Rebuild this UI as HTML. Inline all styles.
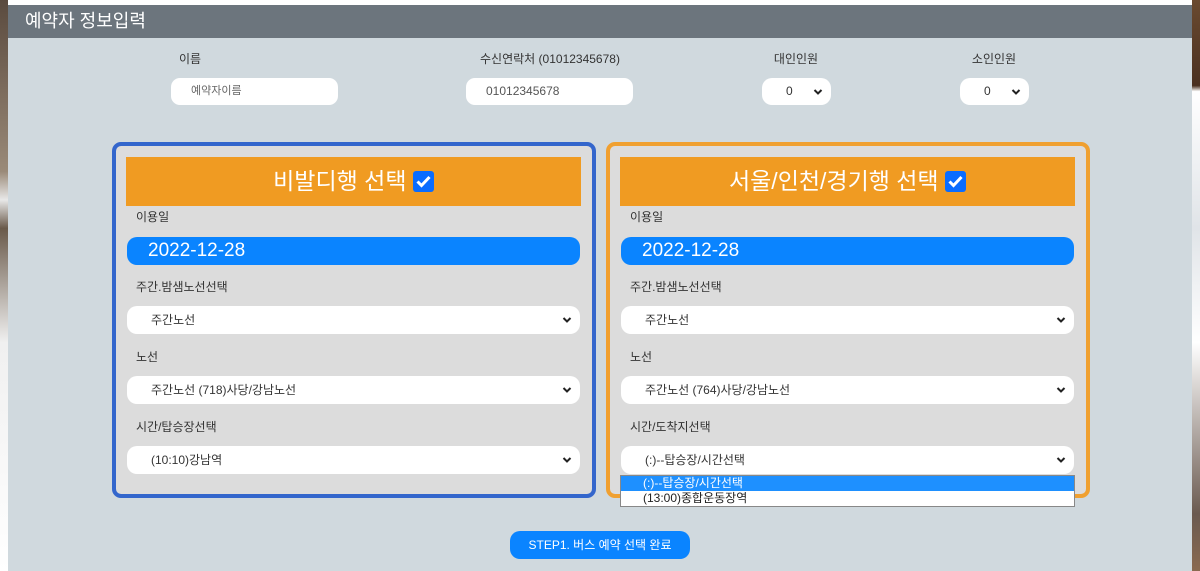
<!DOCTYPE html>
<html><head><meta charset="utf-8"><style>
*{box-sizing:border-box;margin:0;padding:0}
body{width:1200px;height:571px;overflow:hidden;position:relative;background:#fff;font-family:"Liberation Sans","Noto Sans CJK KR",sans-serif;color:#333}
.a{position:absolute}
.lbl{font-size:12px;color:#333;text-align:center}
.inp{background:#fff;border-radius:9px;font-size:12px;color:#555;padding-left:20px;line-height:27px}
.sel{background:#fff;border-radius:10px;font-size:12px;color:#333;line-height:28px;padding-left:20px}
.chev{position:absolute;right:8px;top:0;width:10px;height:28px}
.box{border-radius:9px;background:#dcdcdc}
.small{font-size:12px;color:#333}
</style></head><body>
<div class="a" style="left:0;top:0;width:8px;height:571px;background:linear-gradient(#5a4a3e,#9a8a78 30%,#e8e8e8 35%,#6a5a4a 40%,#f0f0f0 60%,#fff)"></div>
<div class="a" style="left:1192px;top:0;width:8px;height:571px;background:linear-gradient(#6a4a30,#4a3020 15%,#fff 16%,#e0e4e8 40%,#fff 60%,#6a5a50 90%,#8a6a50)"></div>
<div class="a" style="left:8px;top:5px;width:1184px;height:566px;background:#d0d9de"></div>
<div class="a" style="left:8px;top:5px;width:1184px;height:33px;background:#6c757d;color:#fff;font-size:18px;line-height:32px;padding-left:17px">예약자 정보입력</div>

<div class="a lbl" style="left:150px;top:50px;width:80px">이름</div>
<div class="a lbl" style="left:440px;top:50px;width:220px">수신연락처 (01012345678)</div>
<div class="a lbl" style="left:756px;top:50px;width:80px">대인인원</div>
<div class="a lbl" style="left:954px;top:50px;width:80px">소인인원</div>
<div class="a inp" style="left:171px;top:78px;width:167px;height:27px;font-size:11px;color:#666">예약자이름</div>
<div class="a inp" style="left:466px;top:78px;width:167px;height:27px">01012345678</div>
<div class="a sel" style="left:762px;top:78px;width:69px;height:27px;line-height:27px;padding-left:24px">0<svg class="chev" viewBox="0 0 10 28"><path d="M1.5 12l3.5 3.5 3.5-3.5" stroke="#222" stroke-width="2" fill="none"/></svg></div>
<div class="a sel" style="left:960px;top:78px;width:69px;height:27px;line-height:27px;padding-left:24px">0<svg class="chev" viewBox="0 0 10 28"><path d="M1.5 12l3.5 3.5 3.5-3.5" stroke="#222" stroke-width="2" fill="none"/></svg></div>

<!-- left box -->
<div class="a box" style="left:112px;top:142px;width:484px;height:356px;border:4px solid #3366cc"></div>
<div class="a" style="left:126px;top:157px;width:455px;height:49px;background:#f09b22;color:#fff;font-size:23px;line-height:49px;text-align:center">비발디행 선택 <span style="display:inline-block;width:21px;height:21px;background:#0a6cff;border-radius:3px;vertical-align:-3px;position:relative"><svg width="21" height="21" viewBox="0 0 21 21" style="position:absolute;left:0;top:0"><path d="M4.5 10.5l4 4 8-8.5" stroke="#fff" stroke-width="3" fill="none"/></svg></span></div>
<div class="a small" style="left:136px;top:208px">이용일</div>
<div class="a" style="left:127px;top:237px;width:453px;height:28px;background:#0a84ff;border-radius:10px;color:#fff;font-size:19px;line-height:28px;padding-left:21px">2022-12-28</div>
<div class="a small" style="left:136px;top:278px">주간.밤샘노선선택</div>
<div class="a sel" style="left:127px;top:306px;width:453px;height:28px;padding-left:24px">주간노선<svg class="chev" viewBox="0 0 10 28"><path d="M1.5 12l3.5 3.5 3.5-3.5" stroke="#222" stroke-width="2" fill="none"/></svg></div>
<div class="a small" style="left:136px;top:348px">노선</div>
<div class="a sel" style="left:127px;top:376px;width:453px;height:28px;padding-left:24px">주간노선 (718)사당/강남노선<svg class="chev" viewBox="0 0 10 28"><path d="M1.5 12l3.5 3.5 3.5-3.5" stroke="#222" stroke-width="2" fill="none"/></svg></div>
<div class="a small" style="left:136px;top:418px">시간/탑승장선택</div>
<div class="a sel" style="left:127px;top:446px;width:453px;height:28px;padding-left:24px">(10:10)강남역<svg class="chev" viewBox="0 0 10 28"><path d="M1.5 12l3.5 3.5 3.5-3.5" stroke="#222" stroke-width="2" fill="none"/></svg></div>

<!-- right box -->
<div class="a box" style="left:606px;top:142px;width:484px;height:356px;border:4px solid #f0a030"></div>
<div class="a" style="left:620px;top:157px;width:455px;height:49px;background:#f09b22;color:#fff;font-size:23px;line-height:49px;text-align:center">서울/인천/경기행 선택 <span style="display:inline-block;width:21px;height:21px;background:#0a6cff;border-radius:3px;vertical-align:-3px;position:relative"><svg width="21" height="21" viewBox="0 0 21 21" style="position:absolute;left:0;top:0"><path d="M4.5 10.5l4 4 8-8.5" stroke="#fff" stroke-width="3" fill="none"/></svg></span></div>
<div class="a small" style="left:630px;top:208px">이용일</div>
<div class="a" style="left:621px;top:237px;width:453px;height:28px;background:#0a84ff;border-radius:10px;color:#fff;font-size:19px;line-height:28px;padding-left:21px">2022-12-28</div>
<div class="a small" style="left:630px;top:278px">주간.밤샘노선선택</div>
<div class="a sel" style="left:621px;top:306px;width:453px;height:28px;padding-left:24px">주간노선<svg class="chev" viewBox="0 0 10 28"><path d="M1.5 12l3.5 3.5 3.5-3.5" stroke="#222" stroke-width="2" fill="none"/></svg></div>
<div class="a small" style="left:630px;top:348px">노선</div>
<div class="a sel" style="left:621px;top:376px;width:453px;height:28px;padding-left:24px">주간노선 (764)사당/강남노선<svg class="chev" viewBox="0 0 10 28"><path d="M1.5 12l3.5 3.5 3.5-3.5" stroke="#222" stroke-width="2" fill="none"/></svg></div>
<div class="a small" style="left:630px;top:418px">시간/도착지선택</div>
<div class="a sel" style="left:621px;top:446px;width:453px;height:28px;padding-left:24px">(:)--탑승장/시간선택<svg class="chev" viewBox="0 0 10 28"><path d="M1.5 12l3.5 3.5 3.5-3.5" stroke="#222" stroke-width="2" fill="none"/></svg></div>
<div class="a" style="left:620px;top:475px;width:455px;height:32px;background:#fff;border:1px solid #888;font-size:12px;line-height:15px">
<div style="background:#1e90ff;color:#fff;padding-left:22px">(:)--탑승장/시간선택</div>
<div style="color:#222;padding-left:22px">(13:00)종합운동장역</div>
</div>

<div class="a" style="left:510px;top:531px;width:180px;height:28px;background:#0a84ff;border-radius:10px;color:#fff;font-size:12px;line-height:28px;text-align:center">STEP1. 버스 예약 선택 완료</div>
</body></html>
